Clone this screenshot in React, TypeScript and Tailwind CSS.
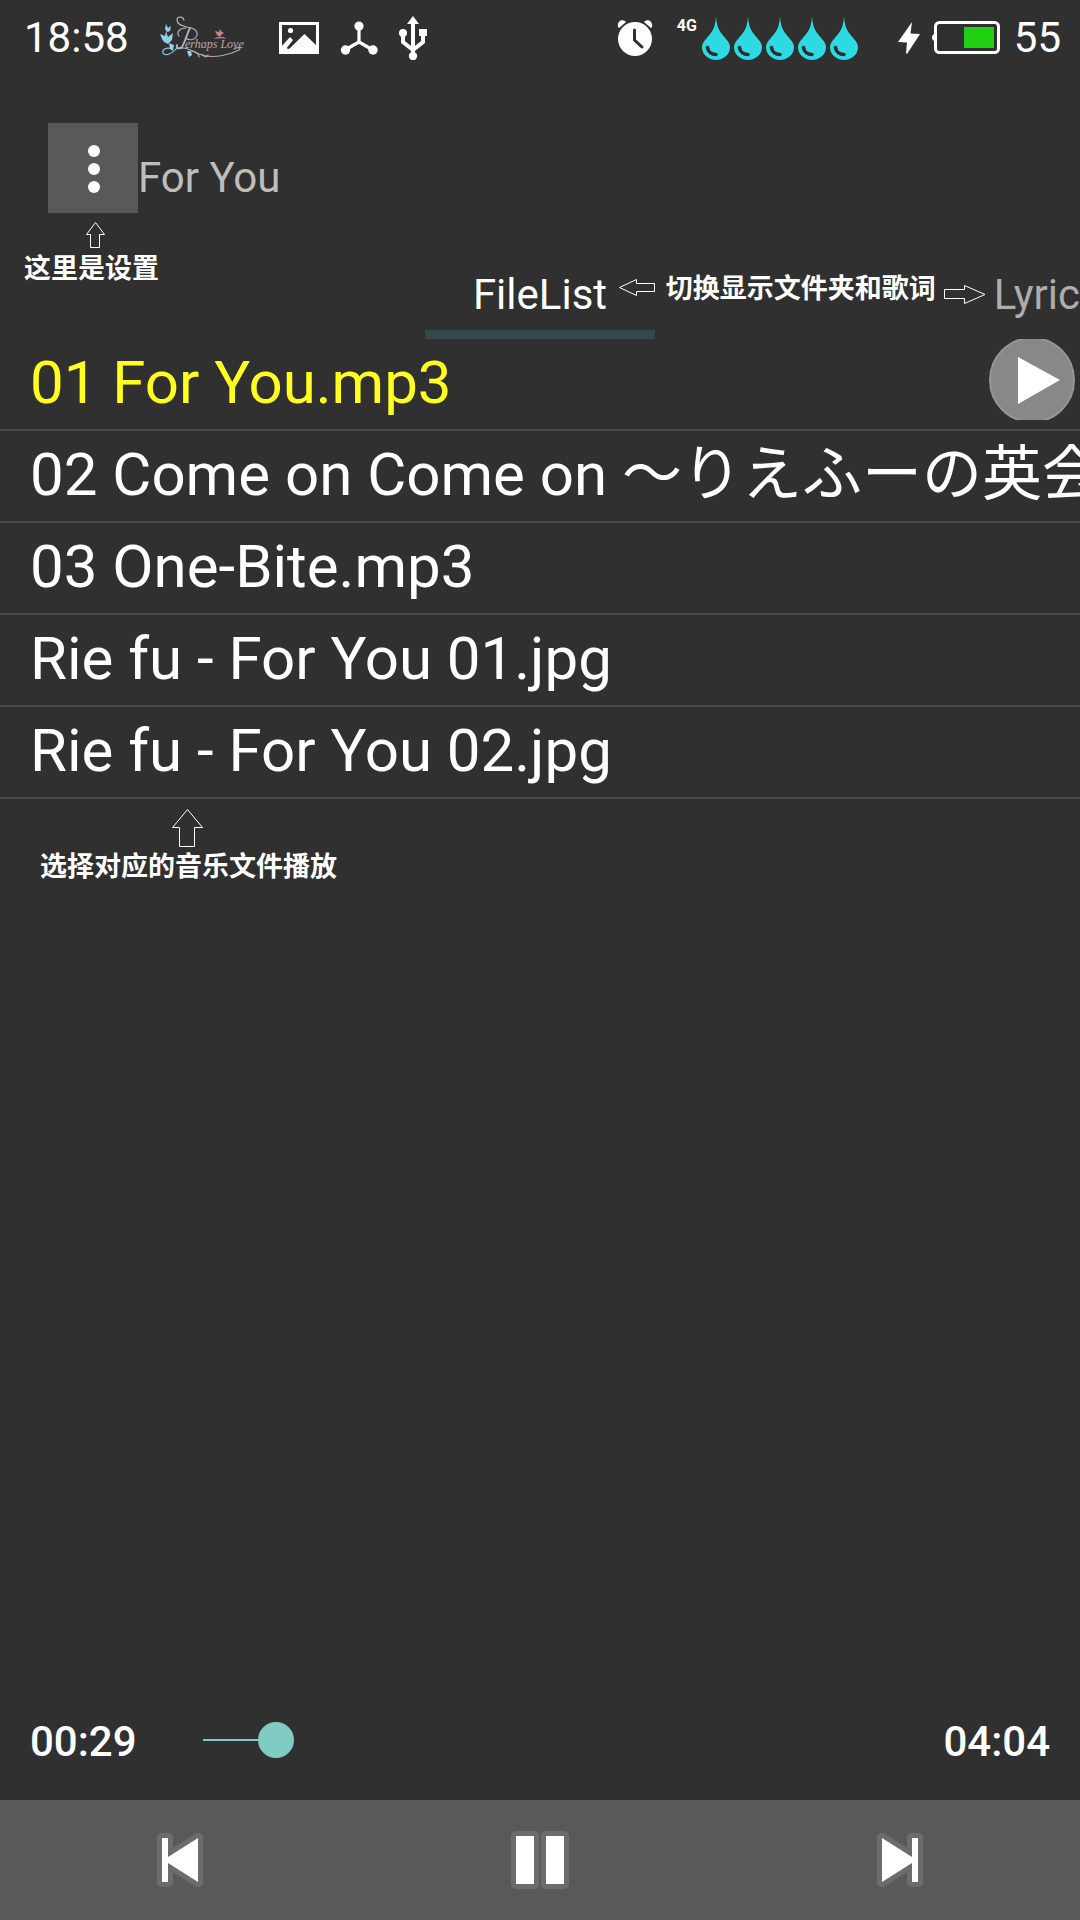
import { useState } from 'react';

const files = [
  '01 For You.mp3',
  '02 Come on Come on 〜りえふーの英会',
  '03 One-Bite.mp3',
  'Rie fu - For You 01.jpg',
  'Rie fu - For You 02.jpg',
];

const DURATION = 244;

function formatTime(seconds: number) {
  const m = String(Math.floor(seconds / 60)).padStart(2, '0');
  const s = String(seconds % 60).padStart(2, '0');
  return `${m}:${s}`;
}

function PerhapsLoveLogo() {
  return (
    <svg width="88" height="44" viewBox="0 0 88 44" fill="none" role="img" aria-label="Perhaps Love">
      <defs>
        <linearGradient id="logoTint" gradientUnits="userSpaceOnUse" x1="0" y1="0" x2="88" y2="0">
          <stop offset="0" stopColor="#8fc9df" />
          <stop offset="0.3" stopColor="#b4b4b8" />
          <stop offset="0.7" stopColor="#c09aa3" />
          <stop offset="1" stopColor="#a3b2c0" />
        </linearGradient>
      </defs>
      <g stroke="url(#logoTint)" strokeWidth="1.200" strokeLinecap="round">
        <path d="M25 4C24 0 18 0 18 4C18 8 23 10 28 11C34 12 39 14 38 19C37 24 30 25 27 22" />
        <path d="M31 12C28 18 26 26 23 31C20 34 17 32 18 29" strokeWidth="1.800" />
        <path d="M20 20C17 16 21 12 27 12" />
        <path d="M13 33C8 31 3 33 4 37C6 41 14 37 17 33C25 29 34 36 43 39C56 43 72 38 80 34C83 31 78 31 75 33" />
        <path d="M33 35C37 36 40 38 40 41M43 38C44 41 48 42 49 39" />
      </g>
      <g fill="#8ed0e8">
        <path d="M1 18L6 20L7 15L9 21L14 17L13 24L9 28L5 26L3 23Z" />
        <path d="M7 8L9 12L12 10L11 15L8 16L6 13Z" />
        <path d="M10 27L15 29L14 35L11 33Z" />
        <path d="M28 35L32 35L33 39L30 41Z" />
      </g>
      <g fill="#c77f8d">
        <path d="M56 15L60 16L61 13L63 16L65 17L62 19L61 21L58 19Z" />
        <path d="M55 23C58 20 65 20 67 23C64 22 59 22 55 23Z" />
      </g>
      <text x="26" y="32" fontSize="12" fontFamily="Liberation Serif, serif" fontStyle="italic" fill="url(#logoTint)">
        erhaps Love
      </text>
    </svg>
  );
}

function Drop() {
  return (
    <svg width="28" height="44" viewBox="0 0 28 44" fill="none">
      <path d="M14 0C14.600 13 19 17 24 23C26.500 26 28 28 28 31C28 38.500 21.500 44 14 44C6.500 44 0 38.500 0 31C0 28 1.500 26 4 23C9 17 13.400 13 14 0Z" fill="#2dd9e3" />
      <path d="M5.500 31.500C6 36 9.500 38.500 14 38.500" stroke="#2b3133" strokeWidth="3.600" strokeLinecap="round" />
    </svg>
  );
}

function StatusBar() {
  return (
    <div className="flex h-[76px] items-center pl-6 pr-[19px] text-[42px] leading-[48px] text-white">
      <span>18:58</span>
      <div className="ml-[30px]">
        <PerhapsLoveLogo />
      </div>
      <svg className="ml-8" width="40" height="32" viewBox="0 0 40 32">
        <rect x="1.500" y="1.500" width="37" height="29" stroke="#fff" strokeWidth="3" fill="none" />
        <circle cx="11.500" cy="8.500" r="2.600" fill="#fff" />
        <path d="M2 25L11 15L14 18L8 26L10 27L25.500 12L38 24V31H2Z" fill="#fff" />
        <path d="M14.500 19.500L8.500 26.500" stroke="#303030" strokeWidth="1.800" />
      </svg>
      <svg className="ml-5" width="40" height="34" viewBox="0 0 40 34" fill="#fff">
        <path d="M20 5V21L6 29M20 21L34 29" stroke="#fff" strokeWidth="3.200" fill="none" />
        <circle cx="20" cy="5" r="4.600" />
        <circle cx="6.500" cy="29" r="4.700" />
        <circle cx="34" cy="29" r="4.700" />
      </svg>
      <svg className="ml-5" width="28" height="44" viewBox="0 0 28 44" fill="#fff">
        <path d="M14 7V40M4 17V26L14 34L24 26V16" stroke="#fff" strokeWidth="4" fill="none" />
        <path d="M14 0L20 8H8Z" />
        <circle cx="4" cy="17" r="4" />
        <rect x="20" y="13" width="8" height="7" />
        <circle cx="14" cy="40" r="4.200" />
      </svg>

      <svg className="ml-auto" width="36" height="36" viewBox="0 0 36 36" fill="#fff">
        <circle cx="18" cy="19" r="17" />
        <path d="M1 7C0 2 4 -1 8 1L9 2L2 8ZM35 7C36 2 32 -1 28 1L27 2L34 8Z" />
        <path d="M17.500 10V20L25 27" stroke="#303030" strokeWidth="3" strokeLinecap="round" fill="none" />
      </svg>
      <span className="mb-6 ml-6 w-[21px] font-['Roboto'] text-[16px] font-bold leading-4">4G</span>
      <div className="ml-1 flex gap-1">
        {[0, 1, 2, 3, 4].map((i) => (
          <Drop key={i} />
        ))}
      </div>
      <svg className="ml-10" width="22" height="32" viewBox="0 0 22 32" fill="#fff">
        <path d="M14 0L12.500 11.500L22 12L9 32L8 31L9 20.500L0 20Z" />
      </svg>
      <svg className="ml-3" width="68" height="34" viewBox="0 0 68 34">
        <rect x="3.500" y="1.500" width="63" height="30" rx="4" stroke="#fff" strokeWidth="3" fill="none" />
        <path d="M3 13C-1 13 -1 20 3 20Z" fill="#fff" />
        <rect x="32" y="6" width="30" height="21" fill="#20d213" />
      </svg>
      <span className="ml-[14px]">55</span>
    </div>
  );
}

function NoteArrow({ className, width, height, points }: { className: string; width: number; height: number; points: string }) {
  return (
    <svg className={className} width={width} height={height} viewBox={`0 0 ${width} ${height}`}>
      <polygon points={points} fill="none" stroke="#fff" strokeWidth="1" />
    </svg>
  );
}

const noteText = "whitespace-nowrap font-['Noto_Sans_CJK_SC','Noto_Sans',sans-serif] text-[27px] font-bold leading-[34px]";

function TrackIcon({ next = false }: { next?: boolean }) {
  const bar = next ? 'M35 5H41V49H35Z' : 'M5 5H11V49H5Z';
  const triangle = next ? 'M5 5V49L35 30V24Z' : 'M41 5V49L11 30V24Z';
  return (
    <svg width="46" height="54" viewBox="0 0 46 54">
      <path d={bar + triangle} fill="#6b6d6c" stroke="#6b6d6c" strokeWidth="10" strokeLinejoin="round" />
      <path d={bar + triangle} fill="#fff" />
    </svg>
  );
}

export default function App() {
  const [position, setPosition] = useState(29);
  const [current, setCurrent] = useState(0);

  return (
    <div className="flex min-h-screen flex-col overflow-hidden bg-[#303030] font-['Roboto','Noto_Sans_CJK_JP',sans-serif] text-white">
      <StatusBar />

      <header className="flex items-end pl-12 pt-[47px]">
        <div className="relative">
          <button aria-label="Settings" className="flex size-[90px] items-center justify-center bg-[#595959]">
            <svg width="14" height="50" viewBox="0 0 14 50" fill="#fff">
              <circle cx="8" cy="8" r="6" />
              <circle cx="8" cy="26" r="6" />
              <circle cx="8" cy="44" r="6" />
            </svg>
          </button>
          <div className="absolute -left-6 top-[99px]">
            <NoteArrow className="ml-[62px]" width={19} height={28} points="9.500,0.500 18.500,12.500 13.500,12.500 13.500,25.500 4.500,25.500 4.500,12.500 0.500,12.500" />
            <p className={noteText}>这里是设置</p>
          </div>
        </div>
        <h1 className="text-[42px] leading-[70px] text-[#bebebe]">For You</h1>
      </header>

      <nav className="mt-[57px] grid grid-cols-[1fr_auto_1fr] text-[42px] leading-[50px]">
        <div className="relative col-start-2">
          <button className="border-b-[9px] border-[#37474f] px-12 pb-[10px]">FileList</button>
          <NoteArrow className="absolute right-0 top-[9px]" width={36} height={17} points="0.500,8.500 17.500,0.500 17.500,4.500 35.500,4.500 35.500,12.500 17.500,12.500 17.500,16.500" />
        </div>
        <div className="flex items-start justify-end gap-2">
          <p className={noteText}>切换显示文件夹和歌词</p>
          <NoteArrow className="mt-[15px] shrink-0" width={42} height={19} points="0.500,4.500 20.500,4.500 20.500,0.500 41,9.500 20.500,18.500 20.500,13.500 0.500,13.500" />
          <button className="text-[#adadad]">Lyric</button>
        </div>
      </nav>

      <ul>
        {files.map((name, i) => (
          <li key={name} className="flex h-[92px] items-start overflow-hidden border-b-2 border-[#4a4a4a]">
            <button
              onClick={() => setCurrent(i)}
              className={`min-w-0 flex-1 overflow-hidden whitespace-nowrap pl-[30px] text-left text-[60px] leading-[88px] ${i === current ? 'text-[#ffff20]' : 'text-white'}`}
            >
              {name}
            </button>
            {i === current && (
              <button aria-label="Play" className="mr-[5px] shrink-0">
                <svg width="86" height="81" viewBox="0 0 86 81">
                  <circle cx="43" cy="41" r="42" fill="#888" stroke="#959595" strokeWidth="2" />
                  <path d="M29 18L71 41L29 65Z" fill="#fff" />
                </svg>
              </button>
            )}
          </li>
        ))}
      </ul>

      <div className="mt-[10px] pl-10">
        <NoteArrow className="ml-[132px]" width={31} height={39} points="15.500,0.500 30.500,18.500 22.500,18.500 22.500,37.500 7.500,37.500 7.500,18.500 0.500,18.500" />
        <p className={noteText}>选择对应的音乐文件播放</p>
      </div>

      <div className="mt-auto flex h-[116px] items-center px-[30px] text-[42px] font-medium leading-[50px]">
        <span>{formatTime(position)}</span>
        <input
          type="range"
          aria-label="Playback position"
          min={0}
          max={DURATION}
          value={position}
          onChange={(e) => setPosition(Number(e.target.value))}
          className="mb-1 ml-12 mr-[106px] h-9 min-w-0 flex-1 appearance-none bg-[linear-gradient(#80cbc4,#80cbc4)] bg-[position:18px_center] bg-no-repeat [&::-webkit-slider-thumb]:size-9 [&::-webkit-slider-thumb]:appearance-none [&::-webkit-slider-thumb]:rounded-full [&::-webkit-slider-thumb]:bg-[#80cbc4]"
          style={{ backgroundSize: `calc((100% - 36px) * ${position / DURATION}) 2px` }}
        />
        <span>{formatTime(DURATION)}</span>
      </div>

      <footer className="grid h-[120px] grid-cols-3 bg-[#595959]">
        <button aria-label="Previous" className="flex items-center justify-center">
          <TrackIcon />
        </button>
        <button aria-label="Pause" className="flex items-center justify-center">
          <svg width="58" height="58" viewBox="0 0 58 58">
            <rect width="28" height="58" rx="5" fill="#6b6d6c" />
            <rect x="30" width="28" height="58" rx="5" fill="#6b6d6c" />
            <rect x="5" y="5" width="18" height="48" fill="#fff" />
            <rect x="35" y="5" width="18" height="48" fill="#fff" />
          </svg>
        </button>
        <button aria-label="Next" className="flex items-center justify-center">
          <TrackIcon next />
        </button>
      </footer>
    </div>
  );
}
